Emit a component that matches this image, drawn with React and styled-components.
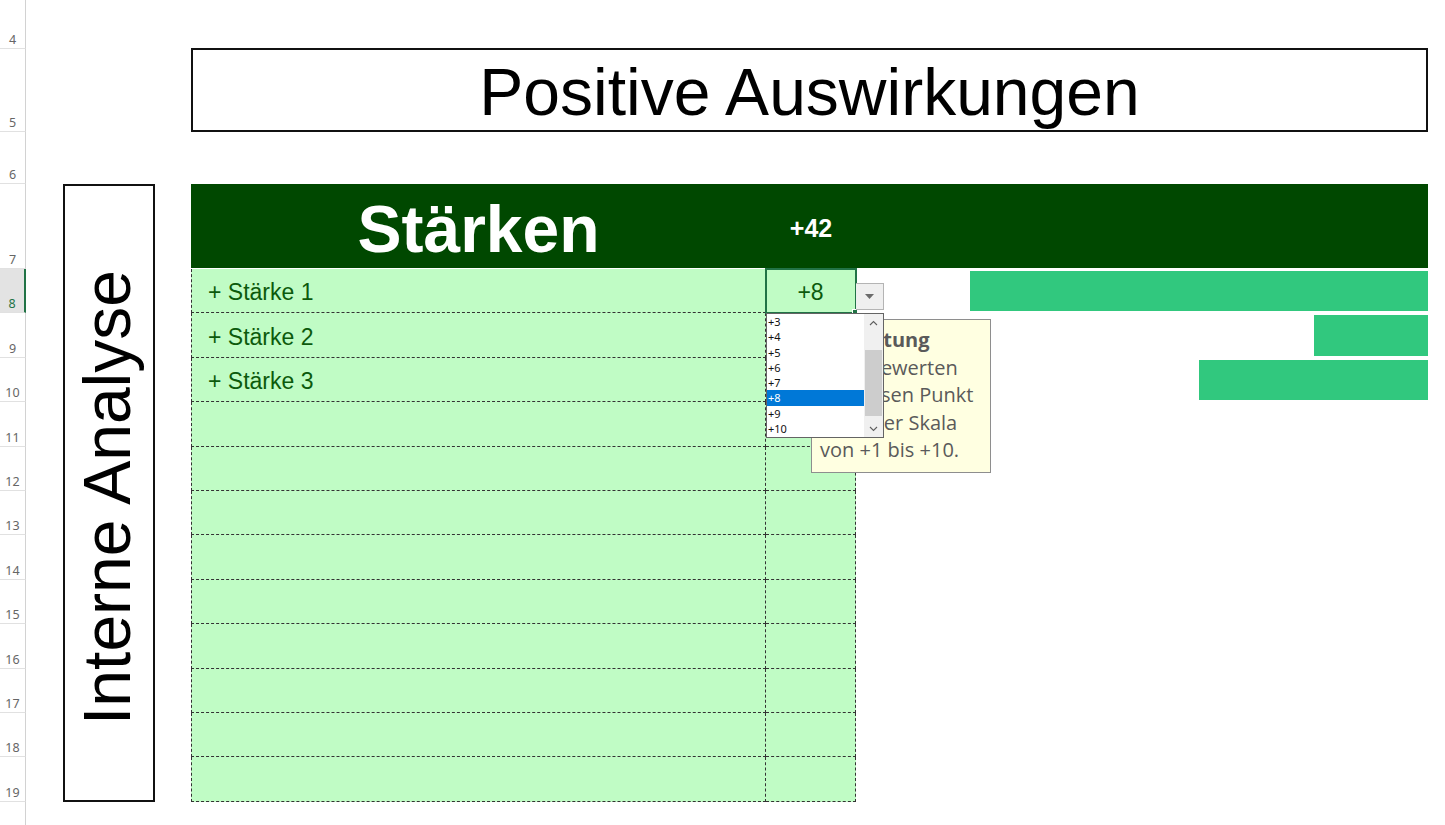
import styled, { createGlobalStyle } from "styled-components";

const GlobalStyle = createGlobalStyle`
  html, body {
    margin: 0;
    padding: 0;
    background: #fff;
  }
  body {
    width: 1445px;
    height: 825px;
    overflow: hidden;
  }
`;

// sheet rows 4..19 are fully visible, row 20 is only its top edge
const ROW_HEIGHTS = [49, 83, 52, 85, ...Array(12).fill(44.42), 44];
const FIRST_ROW = 4;
const LAST_LABELED_ROW = 19;
const ACTIVE_ROW = 8;

const strengths = [
  { label: "+ Stärke 1", score: 8 },
  { label: "+ Stärke 2", score: 2 },
  { label: "+ Stärke 3", score: 4 },
];
const ENTRY_ROWS = 12;
const OPTIONS = [3, 4, 5, 6, 7, 8, 9, 10];

const Sheet = styled.div`
  display: grid;
  grid-template-columns: 26px 37px 92px 36px 575px 90px 572px 1fr;
  grid-template-rows: ${ROW_HEIGHTS.map((h) => `${h}px`).join(" ")};
  height: 825px;
  overflow: hidden;
  font-family: "Liberation Sans", Arial, sans-serif;
`;

const RowHead = styled.div`
  grid-column: 1;
  grid-row: ${(p) => p.$row};
  box-sizing: border-box;
  display: flex;
  align-items: flex-end;
  justify-content: center;
  font-family: "Noto Sans", sans-serif;
  font-size: 12.5px;
  color: ${(p) => (p.$active ? "#217346" : "#666")};
  background: ${(p) => (p.$active ? "#e3e3e3" : "#fff")};
  border-bottom: 1px solid #e1e1e1;
  border-right: ${(p) => (p.$active ? "2px solid #217346" : "1px solid #d2d2d2")};
`;

const TitleBox = styled.div`
  grid-column: 5 / 8;
  grid-row: 2;
  box-sizing: border-box;
  margin-top: -1px;
  border: 2px solid #111;
  display: flex;
  align-items: center;
  justify-content: center;
  padding-top: 4px;
  font-size: 66px;
  color: #000;
`;

const SideBox = styled.div`
  grid-column: 3;
  grid-row: 4 / 17;
  box-sizing: border-box;
  border: 2px solid #111;
  display: flex;
  align-items: center;
  justify-content: center;
  padding: 9px 5px 0 0;
  overflow: hidden;
`;

const SideLabel = styled.span`
  writing-mode: vertical-rl;
  transform: rotate(180deg);
  white-space: nowrap;
  font-size: 66px;
  color: #000;
`;

const Banner = styled.div`
  grid-column: 5 / 8;
  grid-row: 4;
  align-self: start;
  height: 84px;
  background: #004800;
  display: grid;
  grid-template-columns: 575px 90px 1fr;
  align-items: center;
  color: #fff;
  font-weight: 700;
`;

const BannerTitle = styled.div`
  text-align: center;
  font-size: 66px;
  padding-top: 6px;
`;

const BannerTotal = styled.div`
  text-align: center;
  font-size: 25px;
  padding-top: 4px;
`;

const LabelCell = styled.div`
  grid-column: 5;
  grid-row: ${(p) => p.$row};
  box-sizing: border-box;
  background: #c0fcc5;
  border-left: 1px dashed #333;
  border-right: 1px dashed #333;
  border-bottom: 1px dashed #333;
  display: flex;
  align-items: flex-end;
  padding: 0 0 6px 16px;
  font-size: 23px;
  color: #0c5a0c;
`;

const ScoreCell = styled.div`
  grid-column: 6;
  grid-row: ${(p) => p.$row};
  position: relative;
  z-index: ${(p) => (p.$selected ? 5 : "auto")};
  box-sizing: border-box;
  background: #c0fcc5;
  border-right: 1px dashed #333;
  border-bottom: 1px dashed #333;
  display: flex;
  align-items: flex-end;
  justify-content: center;
  padding-bottom: 6px;
  font-size: 23px;
  color: #0c5a0c;
`;

const SelectionFrame = styled.div`
  position: absolute;
  left: -1px;
  top: -1px;
  width: 92px;
  height: 46px;
  box-sizing: border-box;
  border: 2px solid #217346;
  pointer-events: none;
`;

const FillHandle = styled.div`
  position: absolute;
  left: 86px;
  top: 40px;
  width: 6px;
  height: 6px;
  box-sizing: border-box;
  background: #217346;
  border: 1px solid #fff;
`;

const DropButton = styled.div`
  position: absolute;
  left: 90px;
  top: 14px;
  width: 28px;
  height: 27px;
  box-sizing: border-box;
  background: #efefef;
  border: 1px solid #b4b4b4;
  border-left: none;
  display: flex;
  align-items: center;
  justify-content: center;
`;

const ListBox = styled.div`
  position: absolute;
  left: 0;
  top: 44px;
  width: 118px;
  height: 125px;
  box-sizing: border-box;
  border: 1px solid #646464;
  background: #fff;
  display: flex;
  z-index: 3;
`;

const Options = styled.ul`
  flex: 1;
  margin: 0;
  padding: 0;
  list-style: none;
  font-family: "Noto Sans", sans-serif;
  font-size: 11px;
`;

const Option = styled.li`
  height: 15.3px;
  line-height: 15.3px;
  padding-left: 1px;
  color: ${(p) => (p.$active ? "#fff" : "#111")};
  background: ${(p) => (p.$active ? "#0078d7" : "transparent")};
`;

const ScrollTrack = styled.div`
  width: 19px;
  background: #f0f0f0;
  display: flex;
  flex-direction: column;
`;

const ScrollArrow = styled.div`
  height: 17px;
  display: flex;
  align-items: center;
  justify-content: center;
`;

const ScrollThumb = styled.div`
  height: 66px;
  margin: 19px 1px 4px;
  background: #cdcdcd;
`;

const Comment = styled.div`
  position: absolute;
  left: 45px;
  top: 50px;
  width: 180px;
  height: 154px;
  box-sizing: border-box;
  padding: 6px 0 0 8px;
  background: #ffffe1;
  border: 1px solid #8e8e8e;
  font-family: "Open Sans", "Noto Sans", sans-serif;
  font-size: 20px;
  line-height: 27.6px;
  color: #5a5a5a;
  text-align: left;
  white-space: nowrap;
  z-index: 2;
`;

const CommentLine = styled.div`
  font-weight: ${(p) => (p.$bold ? 700 : 400)};
`;

const BarCell = styled.div`
  grid-column: 7;
  grid-row: ${(p) => p.$row};
  box-sizing: border-box;
  padding: 2px 0;
  display: flex;
  justify-content: flex-end;
`;

const Bar = styled.div`
  height: 100%;
  background: #31c87e;
`;

const Chevron = ({ up }) => (
  <svg width="9" height="6" viewBox="0 0 9 6">
    <polyline
      points={up ? "1,5 4.5,1.5 8,5" : "1,1 4.5,4.5 8,1"}
      fill="none"
      stroke="#5f5f5f"
      strokeWidth="1.1"
    />
  </svg>
);

const gridRow = (sheetRow) => sheetRow - FIRST_ROW + 1;

export default function App() {
  const total = 42;
  const firstEntry = gridRow(ACTIVE_ROW);

  return (
    <>
      <GlobalStyle />
      <Sheet>
        {ROW_HEIGHTS.map((_, i) => {
          const n = i + FIRST_ROW;
          return (
            <RowHead key={i} $row={i + 1} $active={n === ACTIVE_ROW}>
              {n <= LAST_LABELED_ROW ? n : ""}
            </RowHead>
          );
        })}

        <TitleBox>Positive Auswirkungen</TitleBox>

        <SideBox>
          <SideLabel>Interne Analyse</SideLabel>
        </SideBox>

        <Banner>
          <BannerTitle>Stärken</BannerTitle>
          <BannerTotal>+{total}</BannerTotal>
        </Banner>

        {Array.from({ length: ENTRY_ROWS }).map((_, i) => {
          const item = strengths[i];
          const row = firstEntry + i;
          const selected = i === 0;
          return [
            <LabelCell key={`l${i}`} $row={row}>
              {item ? item.label : ""}
            </LabelCell>,
            <ScoreCell key={`s${i}`} $row={row} $selected={selected}>
              {item ? `+${item.score}` : ""}
              {selected && (
                <>
                  <SelectionFrame />
                  <FillHandle />
                  <DropButton>
                    <svg width="9" height="5" viewBox="0 0 9 5">
                      <polygon points="0,0 9,0 4.5,5" fill="#6b6b6b" />
                    </svg>
                  </DropButton>
                  <Comment>
                    <CommentLine $bold>Bewertung</CommentLine>
                    <CommentLine>Bitte bewerten</CommentLine>
                    <CommentLine>Sie diesen Punkt</CommentLine>
                    <CommentLine>auf einer Skala</CommentLine>
                    <CommentLine>von +1 bis +10.</CommentLine>
                  </Comment>
                  <ListBox>
                    <Options>
                      {OPTIONS.map((o) => (
                        <Option key={o} $active={o === item.score}>
                          +{o}
                        </Option>
                      ))}
                    </Options>
                    <ScrollTrack>
                      <ScrollArrow>
                        <Chevron up />
                      </ScrollArrow>
                      <ScrollThumb />
                      <ScrollArrow>
                        <Chevron />
                      </ScrollArrow>
                    </ScrollTrack>
                  </ListBox>
                </>
              )}
            </ScoreCell>,
          ];
        })}

        {strengths.map((s, i) => (
          <BarCell key={`b${i}`} $row={firstEntry + i}>
            <Bar style={{ width: `${(s.score / 10) * 100}%` }} />
          </BarCell>
        ))}
      </Sheet>
    </>
  );
}
